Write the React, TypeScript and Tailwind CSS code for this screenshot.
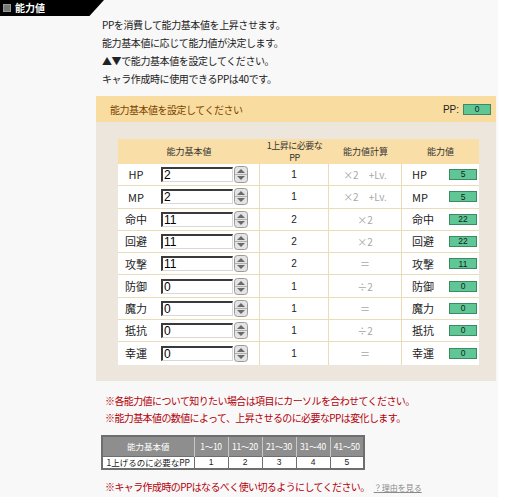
import React from 'react'

const rows = [
  { k: 'HP', base: '2', pp: '1', calc: '×2　+Lv.', val: '5' },
  { k: 'MP', base: '2', pp: '1', calc: '×2　+Lv.', val: '5' },
  { k: '命中', base: '11', pp: '2', calc: '×2', val: '22' },
  { k: '回避', base: '11', pp: '2', calc: '×2', val: '22' },
  { k: '攻撃', base: '11', pp: '2', calc: '＝', val: '11' },
  { k: '防御', base: '0', pp: '1', calc: '÷2', val: '0' },
  { k: '魔力', base: '0', pp: '1', calc: '＝', val: '0' },
  { k: '抵抗', base: '0', pp: '1', calc: '÷2', val: '0' },
  { k: '幸運', base: '0', pp: '1', calc: '＝', val: '0' },
]

const ranges = ['1～10', '11～20', '21～30', '31～40', '41～50']

function Spinner() {
  return (
    <svg width="14" height="17" viewBox="0 0 14 17" className="block">
      <rect x="0.5" y="0.5" width="13" height="16" rx="3" fill="#e4e4e4" stroke="#9a9a9a" />
      <line x1="1" y1="8.5" x2="13" y2="8.5" stroke="#b0b0b0" />
      <path d="M3 7 L7 3 L11 7 Z" fill="#6a6a6a" />
      <path d="M3 10 L7 14 L11 10 Z" fill="#6a6a6a" />
    </svg>
  )
}

function GreenBox({ v }: { v: string }) {
  return (
    <div className="w-[28px] h-[11px] bg-[#5fc796] border border-[#3d8a62] flex items-center justify-center text-[8.5px] leading-none text-[#1a1a1a] font-['Liberation_Sans',sans-serif]">
      {v}
    </div>
  )
}

export default function App() {
  return (
    <div className="w-[512px] h-[497px] bg-white overflow-hidden text-[10px] text-[#222] font-['Noto_Sans_CJK_JP',sans-serif]">
      <div className="w-[498px] h-full bg-[#f8f8f8]">
        {/* tab */}
        <div className="h-[16px] w-[104px] bg-black flex items-center gap-[4px] pl-[3px] [clip-path:polygon(0_0,100%_0,86%_100%,0_100%)]">
          <div className="w-[8px] h-[8px] bg-[#777] border border-[#999]" />
          <span className="text-white text-[10px] font-bold leading-none">能力値</span>
        </div>

        {/* intro */}
        <div className="pl-[102px] leading-[18px] tracking-[-0.4px]">
          <p>PPを消費して能力基本値を上昇させます。</p>
          <p>能力基本値に応じて能力値が決定します。</p>
          <p>▲▼で能力基本値を設定してください。</p>
          <p>キャラ作成時に使用できるPPは40です。</p>
        </div>

        {/* panel */}
        <div className="ml-[96px] mt-[8px] w-[400px]">
          <div className="h-[26px] bg-[#f9dc9f] flex items-center justify-between pl-[14px] pr-[5px]">
            <span className="text-[#7a4500] tracking-[-0.5px]">能力基本値を設定してください</span>
            <div className="flex items-center gap-[4px]">
              <span className="font-['Liberation_Sans',sans-serif] text-[10px]">PP:</span>
              <GreenBox v="0" />
            </div>
          </div>
          <div className="bg-[#ece6dd] pl-[22px] pr-[17px] pt-[17px] pb-[16px]">
            <div className="w-[361px] bg-white">
              <div className="grid grid-cols-[142px_69px_73px_77px] h-[25px] bg-[#f9dfa7] text-[9px] text-[#333]">
                <div className="flex items-center justify-center">能力基本値</div>
                <div className="flex flex-col items-center justify-center text-center leading-[12px] tracking-[-0.5px]">
                  <span>1上昇に必要な</span>
                  <span>PP</span>
                </div>
                <div className="flex items-center justify-center">能力値計算</div>
                <div className="flex items-center justify-center">能力値</div>
              </div>
              {rows.map((r) => (
                <div key={r.k} className="grid grid-cols-[142px_69px_73px_77px] h-[22.3px] border-b border-[#eadcb8] last:border-b-0">
                  <div className="flex items-center border-r border-[#eadcb8]">
                    <span className="w-[34px] text-center text-[11px] pl-[2px]">{r.k}</span>
                    <div className="ml-[9px] w-[72px] h-[15px] bg-white border-t-2 border-l-2 border-t-[#3a3a3a] border-l-[#3a3a3a] border-b border-r border-b-[#d8d8d8] border-r-[#d8d8d8] pl-[1px] flex items-center text-[12px] leading-none font-['Liberation_Sans',sans-serif] text-black">
                      {r.base}
                    </div>
                    <div className="ml-[1px]"><Spinner /></div>
                  </div>
                  <div className="flex items-center justify-center border-r border-[#eadcb8] font-['Liberation_Sans',sans-serif] text-[10px]">{r.pp}</div>
                  <div className="flex items-center justify-center border-r border-[#eadcb8] text-[#a8a8a8] text-[10px]">{r.calc}</div>
                  <div className="flex items-center justify-between pl-[10px] pr-[2px]">
                    <span className="text-[11px]">{r.k}</span>
                    <GreenBox v={r.val} />
                  </div>
                </div>
              ))}
            </div>
          </div>
        </div>

        {/* notes */}
        <div className="pl-[105px] mt-[11px] leading-[17px] text-[#b3000a] tracking-[-0.6px]">
          <p>※各能力値について知りたい場合は項目にカーソルを合わせてください。</p>
          <p>※能力基本値の数値によって、上昇させるのに必要なPPは変化します。</p>
        </div>

        {/* pp table */}
        <table className="ml-[101px] mt-[9px] border-collapse border-2 border-[#6e6e6e] text-[8.5px] leading-none">
          <thead>
            <tr className="bg-[#8e8e8e] text-white h-[21px]">
              <th className="w-[92px] font-normal border-r border-[#c8c8c8]">能力基本値</th>
              {ranges.map((g) => (
                <th key={g} className="w-[34px] font-normal border-r border-[#c8c8c8] last:border-r-0 tracking-[-0.3px]">{g}</th>
              ))}
            </tr>
          </thead>
          <tbody>
            <tr className="bg-white h-[12px]">
              <td className="text-center border-r border-t border-[#6e6e6e]">1上げるのに必要なPP</td>
              {['1', '2', '3', '4', '5'].map((n) => (
                <td key={n} className="text-center border-r border-t border-[#6e6e6e] font-['Liberation_Sans',sans-serif]">{n}</td>
              ))}
            </tr>
          </tbody>
        </table>

        <div className="pl-[105px] mt-[8px] leading-[17px] flex items-baseline">
          <span className="text-[#b3000a] tracking-[-0.6px]">※キャラ作成時のPPはなるべく使い切るようにしてください。</span>
          <span className="ml-[4px] text-[8px] text-[#8a8a8a] underline">？理由を見る</span>
        </div>
      </div>
    </div>
  )
}
